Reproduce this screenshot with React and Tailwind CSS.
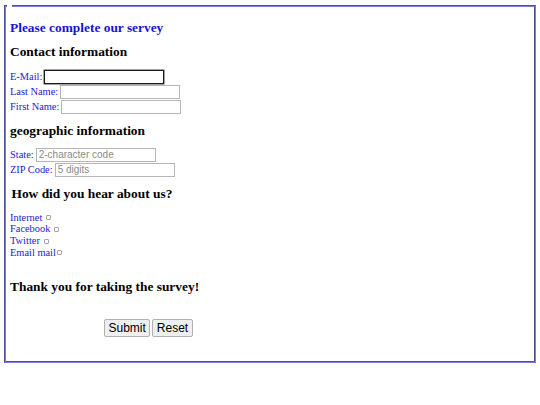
import React from "react";

const serif = "font-['Liberation_Serif','Times_New_Roman',serif]";
const sans = "font-['Liberation_Sans',Arial,sans-serif]";

function Field({ label, placeholder, focused }) {
  return (
    <div className="flex h-[15px] items-center">
      <label className={`text-[10.4px] leading-[12px] text-[#2222cc] ${serif}`}>{label}</label>
      <input
        type="text"
        placeholder={placeholder}
        className={`ml-[2px] h-[14px] w-[120px] border px-[2px] text-[10px] ${sans} placeholder:text-[#8a8a8a] outline-none ${
          focused ? "border-[#1a1a1a] shadow-[0_0_0_0.5px_#444]" : "border-[#b5b5b5]"
        }`}
      />
    </div>
  );
}

function Check({ label, gap = true }) {
  return (
    <div className="flex h-[11.7px] items-center">
      <span className={`text-[10.4px] leading-[11.7px] text-[#2222cc] ${serif}`}>{label}</span>
      <input
        type="checkbox"
        className={`${gap ? "ml-[4px]" : "ml-px"} mt-[1px] h-[5px] w-[5px] appearance-none rounded-[1px] border border-[#a5a5a5] bg-white`}
      />
    </div>
  );
}

export default function App() {
  const heading = `text-[13.4px] font-bold leading-[16px] ${serif}`;

  return (
    <div className="h-[405px] w-[540px] bg-white pt-[5px]">
      <fieldset className="mx-[4px] h-[358px] border-2 border-[#7c7ce6] [border-style:groove]">
        <legend className="ml-px px-[2.5px] text-[1px] leading-[0]">&nbsp;</legend>
        <div className="pl-[4px]">
          <h3 className={`mt-[12.5px] ${heading} text-[#1515cc]`}>Please complete our servey</h3>
          <h3 className={`mt-[8px] ${heading} text-black`}>Contact information</h3>

          <div className="mt-[9.5px]">
            <Field label="E-Mail:" focused />
            <Field label="Last Name:" />
            <Field label="First Name:" />
          </div>

          <h3 className={`mt-[8.5px] ${heading} text-black`}>geographic information</h3>

          <div className="mt-[8.5px]">
            <Field label="State:" placeholder="2-character code" />
            <Field label="ZIP Code:" placeholder="5 digits" />
          </div>

          <h3 className={`mt-[8.5px] pl-[1.5px] ${heading} text-black`}>How did you hear about us?</h3>

          <div className="mt-[10px]">
            <Check label="Internet" />
            <Check label="Facebook" />
            <Check label="Twitter" />
            <Check label="Email mail" gap={false} />
          </div>

          <h3 className={`mt-[20.5px] ${heading} text-black`}>Thank you for taking the survey!</h3>

          <div className={`mt-[24px] flex gap-[2px] pl-[94px] ${sans}`}>
            <button className="h-[18px] rounded-[2px] border border-[#b0b0b0] bg-[#efefef] px-[3.5px] text-[12px] leading-[16px] text-black">
              Submit
            </button>
            <button className="h-[18px] rounded-[2px] border border-[#b0b0b0] bg-[#efefef] px-[3.5px] text-[12px] leading-[16px] text-black">
              Reset
            </button>
          </div>
        </div>
      </fieldset>
    </div>
  );
}
